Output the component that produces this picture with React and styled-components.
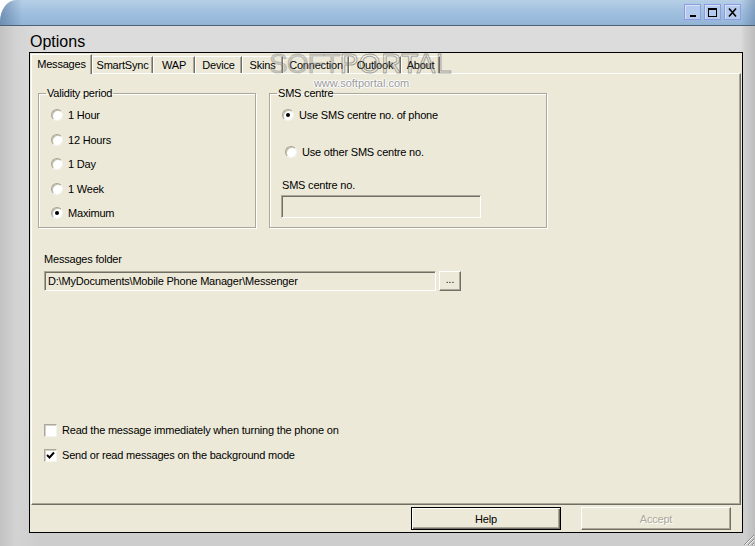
import React from "react";
import styled, { createGlobalStyle } from "styled-components";

const Global = createGlobalStyle`
  html, body { margin: 0; padding: 0; background: #ffffff; }
  body { font-family: "Liberation Sans", Arial, sans-serif; font-size: 11px; color: #000; }
  * { box-sizing: border-box; }
`;

const Window = styled.div`
  width: 755px;
  height: 546px;
  display: flex;
  flex-direction: column;
  position: relative;
  overflow: hidden;
  background: #ffffff;
  letter-spacing: -0.2px;
`;

const TitleBar = styled.div`
  height: 26px;
  flex: none;
  display: flex;
  align-items: center;
  justify-content: flex-end;
  padding-right: 14px;
  border-top-left-radius: 16px 22px;
  border-bottom: 1px solid #4f6274;
  background:
    linear-gradient(to right, rgba(60, 90, 130, 0.45) 0px, rgba(60, 90, 130, 0) 22px),
    linear-gradient(to left, rgba(60, 90, 130, 0.35) 0px, rgba(60, 90, 130, 0) 14px),
    linear-gradient(to bottom, #b6cfe6 0%, #a2c1e0 45%, #92b4d6 100%);
`;

const CtrlGroup = styled.div`
  display: flex;
  gap: 3px;
  margin-top: -1px;
`;

const CtrlButton = styled.div`
  width: 17px;
  height: 16px;
  border: 1px solid #8e9be0;
  background: #b4cbee;
  box-shadow: inset 1px 1px 0 #d6e2f6;
  display: flex;
  align-items: center;
  justify-content: center;
`;

const Body = styled.div`
  flex: 1;
  display: flex;
  flex-direction: column;
  padding: 6px 12px 13px 29px;
  background:
    linear-gradient(to right, #c2c2c2 0px, #d3d3d3 16px, rgba(211, 211, 211, 0) 40px),
    linear-gradient(to left, #bdbdbd 0px, #cfcfcf 10px, rgba(207, 207, 207, 0) 14px),
    linear-gradient(to bottom, #dcdcdc 0%, #d6d6d6 50%, #cdcdcd 100%);
`;

const Heading = styled.div`
  height: 20px;
  flex: none;
  font-size: 16px;
  line-height: 20px;
  padding-left: 1px;
  letter-spacing: 0;
  color: #000;
`;

const Panel = styled.div`
  flex: 1;
  display: flex;
  flex-direction: column;
  border: 1px solid #000;
  background: #ece9d8;
  position: relative;
`;

const TabStrip = styled.div`
  height: 20px;
  flex: none;
  display: flex;
  align-items: flex-end;
  padding-left: 1px;
  position: relative;
  z-index: 1;
`;

const Tab = styled.div`
  width: ${(p) => p.$w}px;
  height: ${(p) => (p.$active ? "20px" : "17px")};
  margin-bottom: ${(p) => (p.$active ? "-1px" : "0")};
  padding-bottom: ${(p) => (p.$active ? "2px" : "0")};
  display: flex;
  align-items: center;
  justify-content: center;
  background: #ece9d8;
  border-left: 1px solid #ffffff;
  border-top: 1px solid #ffffff;
  border-right: 1px solid #716f64;
  box-shadow: inset -1px 0 0 #aca899;
  white-space: nowrap;
  font-size: 11px;
`;

const TabPage = styled.div`
  height: 432px;
  flex: none;
  margin: 0 1px;
  border-top: 1px solid #ffffff;
  border-left: 1px solid #ffffff;
  border-right: 1px solid #716f64;
  border-bottom: 1px solid #716f64;
  box-shadow: inset -1px -1px 0 #aca899;
  padding: 13px 0 0 6px;
  display: flex;
  flex-direction: column;
`;

const GroupRow = styled.div`
  display: flex;
  gap: 13px;
`;

const Group = styled.fieldset`
  margin: 0;
  width: ${(p) => p.$w}px;
  height: 141px;
  padding: 3px 0 0 7px;
  border: 1px solid #aca899;
  box-shadow: 1px 1px 0 #ffffff, inset 1px 1px 0 #ffffff;
  display: flex;
  flex-direction: column;
`;

const Legend = styled.legend`
  padding: 0 1px;
  line-height: 13px;
  font-size: 11px;
  color: #000;
`;

const RadioRow = styled.label`
  height: 24.5px;
  display: flex;
  align-items: center;
  gap: ${(p) => p.$gap || 5}px;
  padding-left: ${(p) => p.$indent || 5}px;
  margin-top: ${(p) => p.$mt || 0}px;
  white-space: nowrap;
`;

const RadioDot = styled.span`
  width: 12px;
  height: 12px;
  flex: none;
  border-radius: 50%;
  background: #ffffff;
  border: 1px solid;
  border-color: #a6a394 #f4f3ee #f4f3ee #a6a394;
  box-shadow: inset 1px 1px 0 #c4c1b2;
  display: flex;
  align-items: center;
  justify-content: center;
  &::after {
    content: "";
    width: 4px;
    height: 4px;
    border-radius: 50%;
    background: ${(p) => (p.$on ? "#000" : "transparent")};
  }
`;

const FieldLabel = styled.div`
  line-height: 14px;
  margin-top: ${(p) => p.$mt || 0}px;
  padding-left: ${(p) => p.$indent || 0}px;
`;

const TextBox = styled.div`
  width: ${(p) => p.$w}px;
  height: ${(p) => p.$h}px;
  margin-left: ${(p) => p.$ml || 0}px;
  margin-top: ${(p) => p.$mt || 0}px;
  background: #ece9d8;
  border: 1px solid;
  border-color: #aca899 #ffffff #ffffff #aca899;
  box-shadow: inset 1px 1px 0 #716f64;
  padding-left: 3px;
  display: flex;
  align-items: center;
  white-space: nowrap;
  overflow: hidden;
`;

const FolderRow = styled.div`
  display: flex;
  gap: 3px;
  margin-top: 5px;
  padding-left: 6px;
`;

const SmallButton = styled.div`
  width: 22px;
  height: 20px;
  border: 1px solid;
  border-color: #ffffff #716f64 #716f64 #ffffff;
  box-shadow: inset -1px -1px 0 #aca899;
  display: flex;
  align-items: center;
  justify-content: center;
  padding-bottom: 3px;
  font-size: 10px;
  letter-spacing: 0px;
`;

const CheckList = styled.div`
  margin-top: 130px;
  display: flex;
  flex-direction: column;
  gap: 7px;
  padding-left: 6px;
`;

const CheckRow = styled.label`
  height: 18px;
  display: flex;
  align-items: center;
  gap: 5px;
  white-space: nowrap;
`;

const CheckBox = styled.span`
  width: 13px;
  height: 13px;
  flex: none;
  background: #ffffff;
  border: 1px solid;
  border-color: #aca899 #f4f3ee #f4f3ee #aca899;
  box-shadow: inset 1px 1px 0 #d4d0c8;
  display: flex;
  align-items: center;
  justify-content: center;
`;

const ButtonRow = styled.div`
  flex: 1;
  display: flex;
  justify-content: flex-end;
  align-items: flex-start;
  gap: 20px;
  padding: 2px 11px 0 0;
`;

const PushButton = styled.div`
  width: 150px;
  height: 23px;
  display: flex;
  align-items: center;
  justify-content: center;
  background: #ece9d8;
  border: 1px solid ${(p) => (p.$default ? "#000" : "#ffffff")};
  ${(p) =>
    p.$default
      ? "box-shadow: inset 1px 1px 0 #ffffff, inset -1px -1px 0 #716f64, inset -2px -2px 0 #aca899;"
      : "border-right-color: #716f64; border-bottom-color: #716f64; box-shadow: inset -1px -1px 0 #aca899;"}
  color: ${(p) => (p.$disabled ? "#aca899" : "#000")};
  text-shadow: ${(p) => (p.$disabled ? "1px 1px 0 #ffffff" : "none")};
`;

const Watermark = styled.div`
  position: absolute;
  left: 239px;
  top: -2px;
  display: flex;
  flex-direction: column;
  align-items: center;
  pointer-events: none;
  z-index: 2;
`;

const WatermarkLogo = styled.div`
  font-family: "Liberation Sans", Arial, sans-serif;
  font-size: 28px;
  line-height: 26px;
  letter-spacing: -1px;
  white-space: nowrap;
`;

const WmSoft = styled.span`
  color: rgba(150, 150, 150, 0.4);
  -webkit-text-stroke: 1px rgba(110, 110, 110, 0.3);
`;

const WmPortal = styled.span`
  color: transparent;
  -webkit-text-stroke: 1px rgba(110, 110, 110, 0.6);
  letter-spacing: 0.5px;
`;

const WatermarkUrl = styled.div`
  font-size: 11px;
  line-height: 12px;
  letter-spacing: 0;
  color: #9a9a9a;
  text-shadow: 1px 0 0 #fff, -1px 0 0 #fff, 0 1px 0 #fff, 0 -1px 0 #fff;
  margin-top: 0px;
  margin-left: 2px;
`;

const Grip = styled.svg`
  position: absolute;
  right: 0;
  bottom: 0;
`;

const tabs = [
  ["Messages", 61],
  ["SmartSync", 61],
  ["WAP", 42],
  ["Device", 47],
  ["Skins", 41],
  ["Connection", 66],
  ["Outlook", 52],
  ["About", 39],
];
const periods = ["1 Hour", "12 Hours", "1 Day", "1 Week", "Maximum"];

export default function App() {
  return (
    <Window>
      <Global />
      <TitleBar>
        <CtrlGroup>
          <CtrlButton>
            <svg width="11" height="11" viewBox="0 0 11 11">
              <rect x="3" y="8" width="6" height="2" fill="#000" />
            </svg>
          </CtrlButton>
          <CtrlButton>
            <svg width="11" height="11" viewBox="0 0 11 11">
              <rect x="1.5" y="1.5" width="8" height="8" fill="none" stroke="#000" strokeWidth="1" />
              <rect x="1" y="1" width="9" height="2" fill="#000" />
            </svg>
          </CtrlButton>
          <CtrlButton>
            <svg width="11" height="11" viewBox="0 0 11 11">
              <path d="M2 1.5 L9 9.5 M9 1.5 L2 9.5" stroke="#000" strokeWidth="1.6" />
            </svg>
          </CtrlButton>
        </CtrlGroup>
      </TitleBar>
      <Body>
        <Heading>Options</Heading>
        <Panel>
          <TabStrip>
            {tabs.map(([t, w], i) => (
              <Tab key={t} $w={w} $active={i === 0}>
                {t}
              </Tab>
            ))}
          </TabStrip>
          <TabPage>
            <GroupRow>
              <Group $w={218}>
                <Legend>Validity period</Legend>
                {periods.map((p) => (
                  <RadioRow key={p}>
                    <RadioDot $on={p === "Maximum"} />
                    {p}
                  </RadioRow>
                ))}
              </Group>
              <Group $w={278}>
                <Legend>SMS centre</Legend>
                <RadioRow>
                  <RadioDot $on />
                  Use SMS centre no. of phone
                </RadioRow>
                <RadioRow $indent={8} $mt={12}>
                  <RadioDot />
                  Use other SMS centre no.
                </RadioRow>
                <FieldLabel $mt={14} $indent={5}>
                  SMS centre no.
                </FieldLabel>
                <TextBox $w={200} $h={23} $ml={4} $mt={3} />
              </Group>
            </GroupRow>
            <FieldLabel $mt={24} $indent={6}>
              Messages folder
            </FieldLabel>
            <FolderRow>
              <TextBox $w={392} $h={20}>
                D:\MyDocuments\Mobile Phone Manager\Messenger
              </TextBox>
              <SmallButton>...</SmallButton>
            </FolderRow>
            <CheckList>
              <CheckRow>
                <CheckBox />
                Read the message immediately when turning the phone on
              </CheckRow>
              <CheckRow>
                <CheckBox>
                  <svg width="9" height="9" viewBox="0 0 9 9">
                    <path d="M1 4 L3.5 6.5 L8 1.5" fill="none" stroke="#000" strokeWidth="2" />
                  </svg>
                </CheckBox>
                Send or read messages on the background mode
              </CheckRow>
            </CheckList>
          </TabPage>
          <ButtonRow>
            <PushButton $default>Help</PushButton>
            <PushButton $disabled>Accept</PushButton>
          </ButtonRow>
          <Watermark>
            <WatermarkLogo>
              <WmSoft>SOFT</WmSoft>
              <WmPortal>PORTAL</WmPortal>
            </WatermarkLogo>
            <WatermarkUrl>www.softportal.com</WatermarkUrl>
          </Watermark>
        </Panel>
      </Body>
      <Grip width="14" height="14" viewBox="0 0 14 14">
        <path d="M13 3 L3 13 M13 7 L7 13 M13 11 L11 13" stroke="#8a8a8a" strokeWidth="1" />
        <path d="M13 4 L4 13 M13 8 L8 13 M13 12 L12 13" stroke="#f4f4f4" strokeWidth="1" />
      </Grip>
    </Window>
  );
}
